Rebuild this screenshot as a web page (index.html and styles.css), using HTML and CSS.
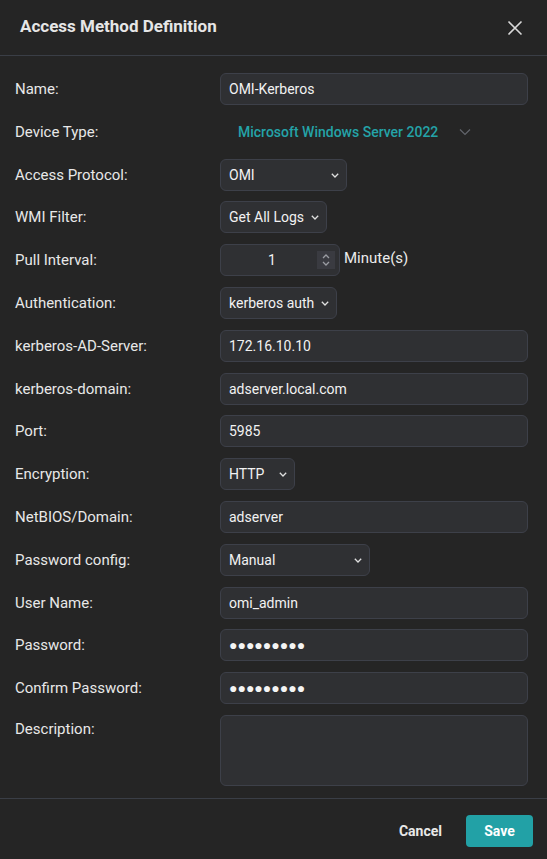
FILE: index.html
```html
<!DOCTYPE html>
<html lang="en">
<head>
    <meta charset="UTF-8">
    <meta name="viewport" content="width=device-width, initial-scale=1.0">
    <title>Access Method Definition</title>
    <link rel="stylesheet" href="styles.css">
</head>
<body>
    <div class="modal">
        <div class="modal-header">
            <h2>Access Method Definition</h2>
            <button class="close-btn" type="button">
                <svg width="16" height="16" viewBox="0 0 16 16"><path d="M1.5 1.5 L14.5 14.5 M14.5 1.5 L1.5 14.5" stroke="#d8d8d8" stroke-width="1.6" fill="none"/></svg>
            </button>
        </div>

        <form class="modal-body">
            <label>Name:</label>
            <input class="field" type="text" value="OMI-Kerberos">

            <label>Device Type:</label>
            <div class="device-type">
                <span>Microsoft Windows Server 2022</span>
                <svg width="12" height="8" viewBox="0 0 12 8"><path d="M1 1.5 L6 6.5 L11 1.5" stroke="#62656c" stroke-width="1.2" fill="none"/></svg>
            </div>

            <label>Access Protocol:</label>
            <div class="select w-protocol">
                <select><option>OMI</option></select>
                <svg class="chev" width="8" height="5" viewBox="0 0 8 5"><path d="M0.8 0.8 L4 4 L7.2 0.8" stroke="#e0e0e0" stroke-width="1.3" fill="none"/></svg>
            </div>

            <label>WMI Filter:</label>
            <div class="select w-filter">
                <select><option>Get All Logs</option></select>
                <svg class="chev" width="8" height="5" viewBox="0 0 8 5"><path d="M0.8 0.8 L4 4 L7.2 0.8" stroke="#e0e0e0" stroke-width="1.3" fill="none"/></svg>
            </div>

            <label>Pull Interval:</label>
            <div class="interval">
                <div class="field number">
                    <span class="num">1</span>
                    <span class="spin">
                        <svg width="10" height="14" viewBox="0 0 10 14"><path d="M2 5 L5 2 L8 5 M2 9 L5 12 L8 9" stroke="#9a9ca2" stroke-width="1.3" fill="none"/></svg>
                    </span>
                </div>
                <span class="unit">Minute(s)</span>
            </div>

            <label>Authentication:</label>
            <div class="select w-auth">
                <select><option>kerberos auth</option></select>
                <svg class="chev" width="8" height="5" viewBox="0 0 8 5"><path d="M0.8 0.8 L4 4 L7.2 0.8" stroke="#e0e0e0" stroke-width="1.3" fill="none"/></svg>
            </div>

            <label>kerberos-AD-Server:</label>
            <input class="field" type="text" value="172.16.10.10">

            <label>kerberos-domain:</label>
            <input class="field" type="text" value="adserver.local.com">

            <label>Port:</label>
            <input class="field" type="text" value="5985">

            <label>Encryption:</label>
            <div class="select w-enc">
                <select><option>HTTP</option></select>
                <svg class="chev" width="8" height="5" viewBox="0 0 8 5"><path d="M0.8 0.8 L4 4 L7.2 0.8" stroke="#e0e0e0" stroke-width="1.3" fill="none"/></svg>
            </div>

            <label>NetBIOS/Domain:</label>
            <input class="field" type="text" value="adserver">

            <label>Password config:</label>
            <div class="select w-pwcfg">
                <select><option>Manual</option></select>
                <svg class="chev" width="8" height="5" viewBox="0 0 8 5"><path d="M0.8 0.8 L4 4 L7.2 0.8" stroke="#e0e0e0" stroke-width="1.3" fill="none"/></svg>
            </div>

            <label>User Name:</label>
            <input class="field" type="text" value="omi_admin">

            <!-- masked values are shown as big discs -->
            <label>Password:</label>
            <input class="field pw" type="text" value="●●●●●●●●●" readonly>

            <label>Confirm Password:</label>
            <input class="field pw" type="text" value="●●●●●●●●●" readonly>

            <label class="top">Description:</label>
            <textarea class="field area"></textarea>
        </form>

        <div class="modal-footer">
            <button class="btn-cancel" type="button">Cancel</button>
            <button class="btn-save" type="button">Save</button>
        </div>
    </div>
</body>
</html>
```

FILE: styles.css
```css
* {
    box-sizing: border-box;
}

body {
    margin: 0;
    background-color: #252525;
    color: #ebebeb;
    font-family: Roboto, "Liberation Sans", sans-serif;
    font-size: 14px;
}

.modal {
    width: 547px;
    height: 859px;
    display: flex;
    flex-direction: column;
}

.modal-header {
    height: 57px;
    padding: 0 20px 4px 20px;
    display: flex;
    align-items: center;
    justify-content: space-between;
    border-bottom: 1px solid #3a3e46;
}

.modal-header h2 {
    margin: 0;
    font-size: 17px;
    font-weight: 700;
    color: #e6e6e6;
}

.close-btn {
    background: none;
    border: none;
    padding: 0;
    margin-right: 4px;
    margin-top: 4px;
    display: flex;
}

/* label column + control column */
.modal-body {
    display: grid;
    grid-template-columns: 205px 308px;
    row-gap: 10.8px;
    align-items: center;
    padding: 17px 0 12px 15px;
}

.modal-body label {
    color: #e8e8e8;
    font-size: 15px;
}

.modal-body label.top {
    align-self: start;
    padding-top: 5px;
}

.field {
    height: 32px;
    width: 100%;
    background-color: #2f3033;
    border: 1px solid #3d4049;
    border-radius: 6px;
    color: #f2f2f2;
    font-family: inherit;
    font-size: 14px;
    padding: 0 8px;
    outline: none;
}

.pw {
    font-family: "Liberation Sans", sans-serif;
    font-size: 14px;
    color: #f4f4f4;
}

.area {
    height: 71px;
    resize: none;
}

.device-type {
    height: 32px;
    display: flex;
    align-items: center;
    padding-left: 18px;
    color: #24a3a8;
    font-weight: 500;
}

.device-type svg {
    margin-left: 21px;
    margin-top: 1px;
}

.select {
    position: relative;
    height: 32px;
}

.select select {
    appearance: none;
    -webkit-appearance: none;
    width: 100%;
    height: 32px;
    background-color: #2f3033;
    border: 1px solid #3d4049;
    border-radius: 6px;
    color: #f2f2f2;
    font-family: inherit;
    font-size: 14px;
    padding: 0 8px;
    outline: none;
}

.select .chev {
    position: absolute;
    right: 8px;
    top: 14px;
    pointer-events: none;
}

.w-protocol { width: 127px; }
.w-filter { width: 107px; }
.w-auth { width: 117px; }
.w-enc { width: 75px; }
.w-pwcfg { width: 150px; }

.interval {
    display: flex;
    align-items: center;
    gap: 4px;
}

.number {
    width: 120px;
    display: flex;
    align-items: center;
    padding: 0 4px 0 0;
}

.number .num {
    flex: 1;
    text-align: center;
    padding-left: 6px;
}

.spin {
    width: 18px;
    height: 18px;
    background-color: #3a3b41;
    display: flex;
    align-items: center;
    justify-content: center;
}

.unit {
    font-size: 15px;
    margin-top: -5px;
}

.modal-footer {
    border-top: 1px solid #3a3e46;
    display: flex;
    justify-content: flex-end;
    align-items: center;
    gap: 24px;
    padding: 16px 14px 12px 0;
}

.modal-footer button {
    font-family: inherit;
    font-size: 14px;
    font-weight: 700;
    border: none;
    cursor: pointer;
}

.btn-cancel {
    background: none;
    color: #e8e8e8;
    padding: 0;
}

.btn-save {
    background-color: #22a1a6;
    color: #ffffff;
    width: 67px;
    height: 32px;
    border-radius: 4px;
}
```
